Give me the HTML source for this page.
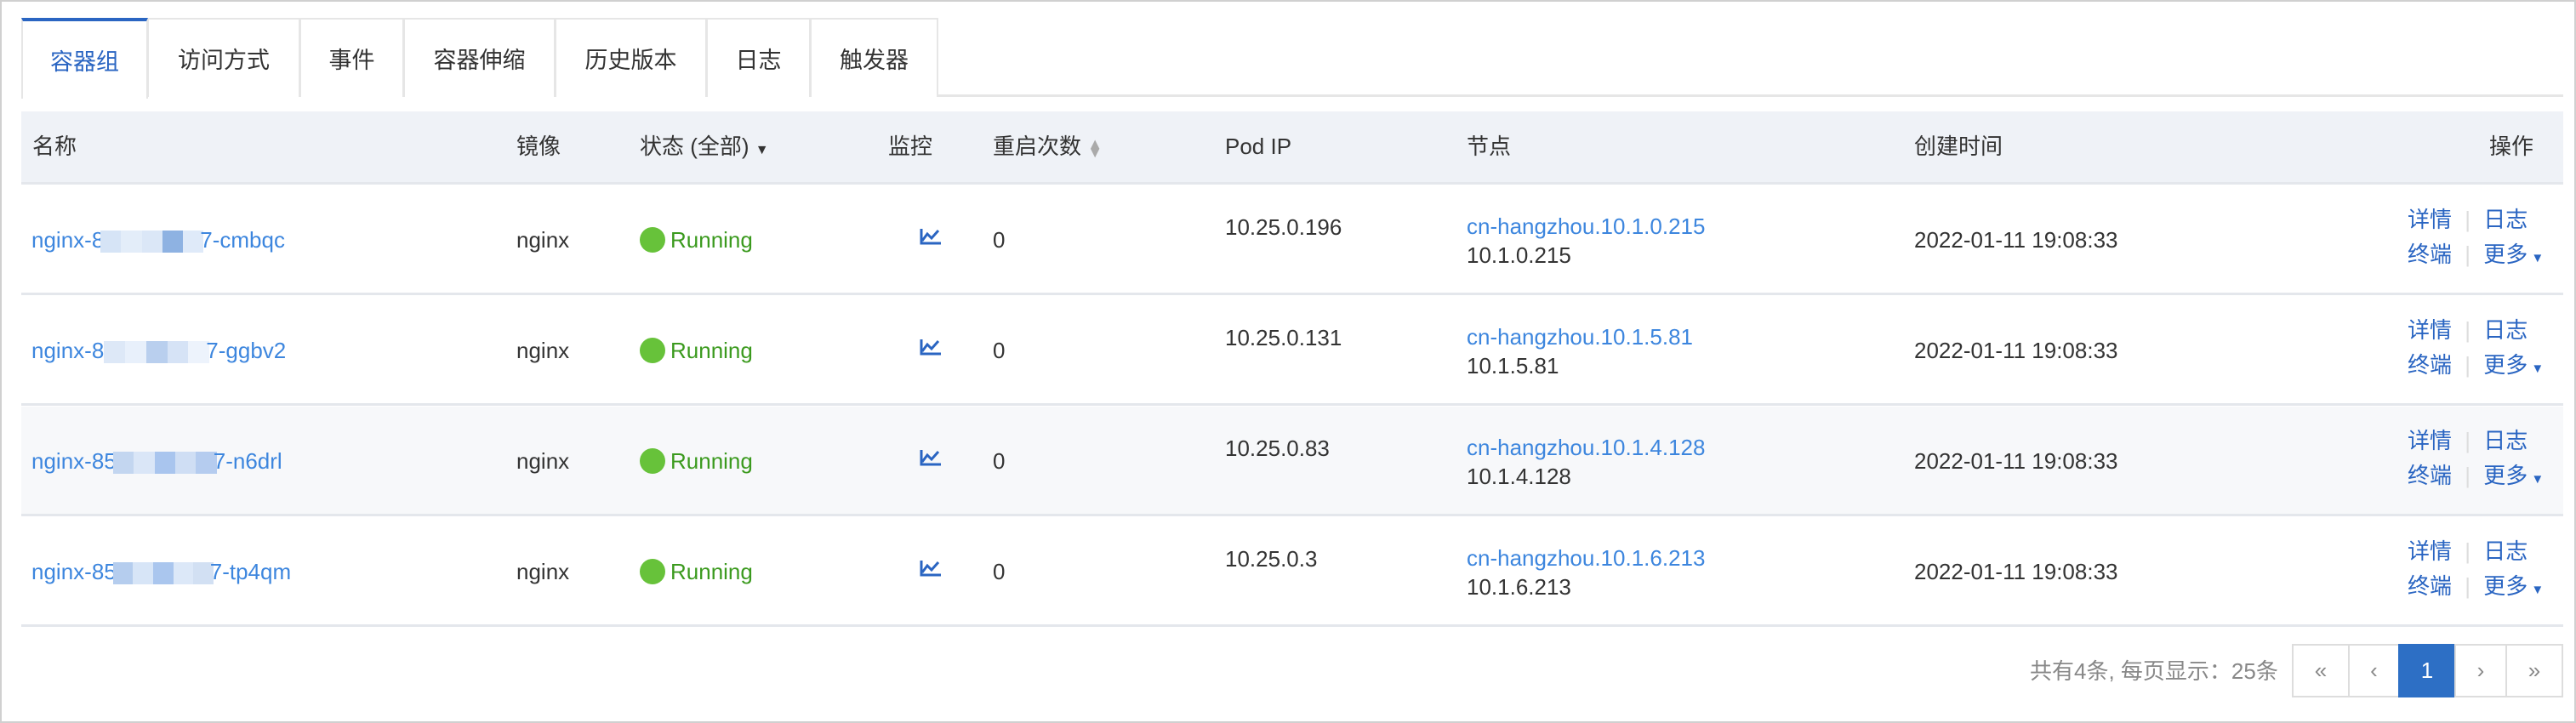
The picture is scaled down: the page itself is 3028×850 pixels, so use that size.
<!DOCTYPE html>
<html><head><meta charset="utf-8"><style>
*{margin:0;padding:0;box-sizing:border-box}
body{width:3028px;height:850px;background:#fff;font-family:"Liberation Sans","Noto Sans CJK SC",sans-serif;font-size:26px;color:#333;position:relative;overflow:hidden}
.frame{position:absolute;left:0;top:0;width:3028px;height:850px;border:2px solid #d0d0d0}
.a{position:absolute;white-space:nowrap;line-height:1}
.tab{position:absolute;top:21px;height:93px;border:2px solid #e6e6e6;border-bottom:none;font-size:27px;display:flex;align-items:center;justify-content:center;background:#fff;color:#333}
.tab.act{border-top:4px solid #2a65c2;color:#2a65c2;height:95px;z-index:2}
.lnk{color:#3d86de}
.op{color:#2a65c2}
.dot{position:absolute;width:30px;height:30px;border-radius:50%;background:#67c23a}
.run{color:#3b9a1e}
.blur{display:inline-flex;height:26px;vertical-align:-6px;margin:0 -4px 0 -4px}
.blur i{display:block;flex:1}
.hline{position:absolute;height:3px;background:#e4e7ec}
.pg{position:absolute;top:757px;height:63px;border:2px solid #ddd;display:flex;align-items:center;justify-content:center;color:#888;font-size:26px;background:#fff}
</style></head><body>
<div class="frame"></div>
<div class="a" style="left:25px;top:111px;width:2988px;height:3px;background:#e6e6e6"></div>
<div class="tab act" style="left:25px;width:149px">容器组</div>
<div class="tab" style="left:173px;width:180px">访问方式</div>
<div class="tab" style="left:352px;width:123px">事件</div>
<div class="tab" style="left:474px;width:179px">容器伸缩</div>
<div class="tab" style="left:652px;width:179px">历史版本</div>
<div class="tab" style="left:830px;width:123px">日志</div>
<div class="tab" style="left:952px;width:151px">触发器</div>
<div class="a" style="left:25px;top:131px;width:2988px;height:85px;background:#eff2f7"></div>
<div class="hline" style="left:25px;top:214px;width:2988px"></div>
<div class="a" style="left:38px;top:159px">名称</div>
<div class="a" style="left:607px;top:159px">镜像</div>
<div class="a" style="left:752px;top:159px">状态 (全部) <span style="font-size:16px">▼</span></div>
<div class="a" style="left:1044px;top:159px">监控</div>
<div class="a" style="left:1167px;top:159px">重启次数 <span style="color:#aaa;font-size:18px;display:inline-block;line-height:10px;vertical-align:middle">▲<br>▼</span></div>
<div class="a" style="left:1440px;top:159px">Pod IP</div>
<div class="a" style="left:1724px;top:159px">节点</div>
<div class="a" style="left:2250px;top:159px">创建时间</div>
<div class="a" style="left:2926px;top:159px">操作</div>
<div class="a" style="left:25px;top:478px;width:2988px;height:128px;background:#f7f8fa"></div>
<div class="hline" style="left:25px;top:344px;width:2988px"></div>
<div class="hline" style="left:25px;top:474px;width:2988px"></div>
<div class="hline" style="left:25px;top:604px;width:2988px"></div>
<div class="hline" style="left:25px;top:734px;width:2988px"></div>

<!-- row 1 -->
<div class="a lnk" style="left:37px;top:269px">nginx-8<span class="blur" style="width:121px"><i style="background:#d6e4f6"></i><i style="background:#e3edf9"></i><i style="background:#dbe7f7"></i><i style="background:#8eb2e2"></i><i style="background:#dfeaf9"></i></span>7-cmbqc</div>
<div class="a" style="left:607px;top:269px">nginx</div>
<div class="dot" style="left:752px;top:267px"></div><div class="a run" style="left:788px;top:269px">Running</div>
<svg class="a" style="left:1081px;top:268px" width="26" height="20" viewBox="0 0 26 20"><path d="M2 1V18H25M3 15L9 7L14 12L22 3" fill="none" stroke="#2a65c2" stroke-width="3"/></svg>
<div class="a" style="left:1167px;top:269px">0</div>
<div class="a" style="left:1440px;top:254px">10.25.0.196</div>
<div class="a lnk" style="left:1724px;top:253px">cn-hangzhou.10.1.0.215</div>
<div class="a" style="left:1724px;top:287px">10.1.0.215</div>
<div class="a" style="left:2250px;top:269px">2022-01-11 19:08:33</div>
<div class="a op" style="left:2830px;top:245px">详情 <span style="color:#ddd;margin:0 8px">|</span> 日志</div>
<div class="a op" style="left:2830px;top:286px">终端 <span style="color:#ddd;margin:0 8px">|</span> 更多<span style="font-size:15px"> ▼</span></div>

<!-- row 2 -->
<div class="a lnk" style="left:37px;top:399px">nginx-8<span class="blur" style="width:124px;margin-left:0"><i style="background:#dde8f7"></i><i style="background:#e8f0fb"></i><i style="background:#b9cfee"></i><i style="background:#d6e3f6"></i><i style="background:#edf3fc"></i></span>7-ggbv2</div>
<div class="a" style="left:607px;top:399px">nginx</div>
<div class="dot" style="left:752px;top:397px"></div><div class="a run" style="left:788px;top:399px">Running</div>
<svg class="a" style="left:1081px;top:398px" width="26" height="20" viewBox="0 0 26 20"><path d="M2 1V18H25M3 15L9 7L14 12L22 3" fill="none" stroke="#2a65c2" stroke-width="3"/></svg>
<div class="a" style="left:1167px;top:399px">0</div>
<div class="a" style="left:1440px;top:384px">10.25.0.131</div>
<div class="a lnk" style="left:1724px;top:383px">cn-hangzhou.10.1.5.81</div>
<div class="a" style="left:1724px;top:417px">10.1.5.81</div>
<div class="a" style="left:2250px;top:399px">2022-01-11 19:08:33</div>
<div class="a op" style="left:2830px;top:375px">详情 <span style="color:#ddd;margin:0 8px">|</span> 日志</div>
<div class="a op" style="left:2830px;top:416px">终端 <span style="color:#ddd;margin:0 8px">|</span> 更多<span style="font-size:15px"> ▼</span></div>

<!-- row 3 -->
<div class="a lnk" style="left:37px;top:529px">nginx-85<span class="blur" style="width:122px"><i style="background:#c3d6f0"></i><i style="background:#dae6f7"></i><i style="background:#a9c5ee"></i><i style="background:#cfdef4"></i><i style="background:#b5ccef"></i></span>7-n6drl</div>
<div class="a" style="left:607px;top:529px">nginx</div>
<div class="dot" style="left:752px;top:527px"></div><div class="a run" style="left:788px;top:529px">Running</div>
<svg class="a" style="left:1081px;top:528px" width="26" height="20" viewBox="0 0 26 20"><path d="M2 1V18H25M3 15L9 7L14 12L22 3" fill="none" stroke="#2a65c2" stroke-width="3"/></svg>
<div class="a" style="left:1167px;top:529px">0</div>
<div class="a" style="left:1440px;top:514px">10.25.0.83</div>
<div class="a lnk" style="left:1724px;top:513px">cn-hangzhou.10.1.4.128</div>
<div class="a" style="left:1724px;top:547px">10.1.4.128</div>
<div class="a" style="left:2250px;top:529px">2022-01-11 19:08:33</div>
<div class="a op" style="left:2830px;top:505px">详情 <span style="color:#ddd;margin:0 8px">|</span> 日志</div>
<div class="a op" style="left:2830px;top:546px">终端 <span style="color:#ddd;margin:0 8px">|</span> 更多<span style="font-size:15px"> ▼</span></div>

<!-- row 4 -->
<div class="a lnk" style="left:37px;top:659px">nginx-85<span class="blur" style="width:118px"><i style="background:#b5cdee"></i><i style="background:#d7e5f7"></i><i style="background:#aac6ee"></i><i style="background:#dce8f8"></i><i style="background:#d2e0f3"></i></span>7-tp4qm</div>
<div class="a" style="left:607px;top:659px">nginx</div>
<div class="dot" style="left:752px;top:657px"></div><div class="a run" style="left:788px;top:659px">Running</div>
<svg class="a" style="left:1081px;top:658px" width="26" height="20" viewBox="0 0 26 20"><path d="M2 1V18H25M3 15L9 7L14 12L22 3" fill="none" stroke="#2a65c2" stroke-width="3"/></svg>
<div class="a" style="left:1167px;top:659px">0</div>
<div class="a" style="left:1440px;top:644px">10.25.0.3</div>
<div class="a lnk" style="left:1724px;top:643px">cn-hangzhou.10.1.6.213</div>
<div class="a" style="left:1724px;top:677px">10.1.6.213</div>
<div class="a" style="left:2250px;top:659px">2022-01-11 19:08:33</div>
<div class="a op" style="left:2830px;top:635px">详情 <span style="color:#ddd;margin:0 8px">|</span> 日志</div>
<div class="a op" style="left:2830px;top:676px">终端 <span style="color:#ddd;margin:0 8px">|</span> 更多<span style="font-size:15px"> ▼</span></div>

<div class="a" style="left:2386px;top:776px;color:#888">共有4条, 每页显示：25条</div>
<div class="pg" style="left:2694px;width:68px">«</div>
<div class="pg" style="left:2760px;width:61px">‹</div>
<div class="pg" style="left:2819px;width:68px;background:#2d6fc5;border-color:#2d6fc5;color:#fff">1</div>
<div class="pg" style="left:2885px;width:62px">›</div>
<div class="pg" style="left:2945px;width:68px">»</div>
</body></html>
